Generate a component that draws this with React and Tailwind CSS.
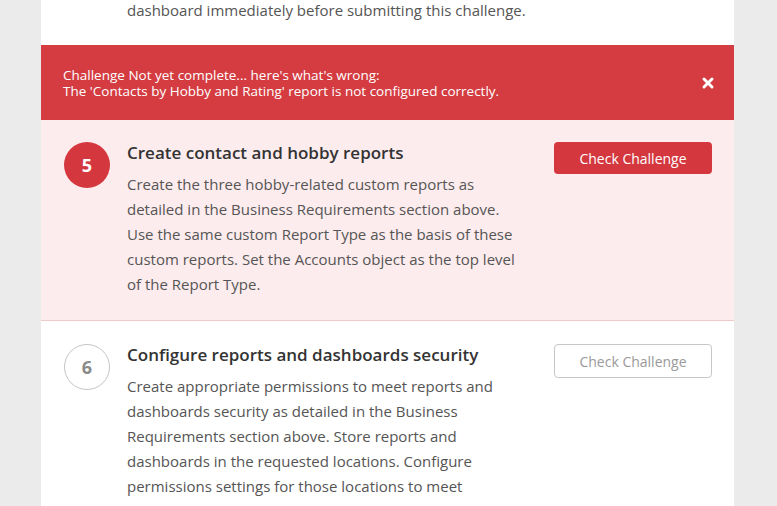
import React from "react";
import { X } from "lucide-react";

const font = { fontFamily: "'Open Sans', Lato, sans-serif" };

const Step = ({ num, title, body, active }) => (
  <div
    className={`flex items-start pl-[23px] pr-[22px] ${
      active ? "bg-[#fdeced] pt-[22px] pb-[23px] border-b border-[#f0c9cb]" : "bg-white pt-[23px] pb-6"
    }`}
  >
    <div
      className={`w-[46px] h-[46px] shrink-0 rounded-full flex items-center justify-center text-[18px] font-bold ${
        active ? "bg-[#d4373e] text-white" : "border border-[#c4c4c4] text-[#8a8a8a]"
      }`}
    >
      {num}
    </div>
    <div className="ml-[17px] w-[398px] shrink-0">
      <h3 className="text-[17px] font-semibold leading-[22px] text-[#333]">{title}</h3>
      <p className="mt-[8px] text-[15px] leading-[25px] text-[#555]">{body}</p>
    </div>
    <div className="ml-auto">
      <button
        className={`w-[158px] rounded-[4px] text-[14px] ${
          active
            ? "h-[32px] bg-[#d4373e] text-white"
            : "h-[34px] border border-[#c7c7c7] bg-white text-[#9a9a9a]"
        }`}
      >
        Check Challenge
      </button>
    </div>
  </div>
);

export default function App() {
  return (
    <div className="w-[777px] h-[506px] overflow-hidden bg-[#ebebeb]" style={font}>
      <div className="ml-[41px] w-[693px] h-full bg-white">
        {/* end of previous step */}
        <div className="h-[45px] pl-[86px] text-[15px] leading-[20px] text-[#555]">
          dashboard immediately before submitting this challenge.
        </div>

        {/* error banner */}
        <div className="h-[75px] bg-[#d43c41] flex items-center pl-[22px] pr-[18px]">
          <div className="text-white text-[13.5px] leading-[16px] pt-[1px]">
            <p>Challenge Not yet complete... here's what's wrong:</p>
            <p>The 'Contacts by Hobby and Rating' report is not configured correctly.</p>
          </div>
          <X className="ml-auto w-[16px] h-[16px] text-white" strokeWidth={4.5} />
        </div>

        <Step
          num="5"
          active
          title="Create contact and hobby reports"
          body="Create the three hobby-related custom reports as detailed in the Business Requirements section above. Use the same custom Report Type as the basis of these custom reports. Set the Accounts object as the top level of the Report Type."
        />
        <Step
          num="6"
          title="Configure reports and dashboards security"
          body="Create appropriate permissions to meet reports and dashboards security as detailed in the Business Requirements section above. Store reports and dashboards in the requested locations. Configure permissions settings for those locations to meet requirements."
        />
      </div>
    </div>
  );
}
